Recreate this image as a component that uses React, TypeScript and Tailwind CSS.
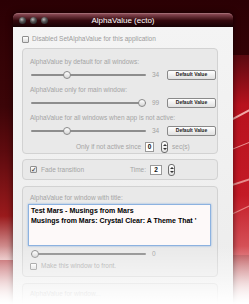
import React from 'react';

const font = "font-['Liberation_Sans',Arial,sans-serif]";

function Check({ on = false }: { on?: boolean }) {
  return (
    <span className="flex items-center justify-center w-[7px] h-[7px] rounded-[1px] border border-[#8f8f8f] bg-gradient-to-b from-white to-[#dcdcdc] text-[7px] leading-none text-[#333]">
      {on ? '✓' : ''}
    </span>
  );
}

function Slider({ pos, value }: { pos: number; value: string }) {
  return (
    <div className="flex items-center h-[10px]">
      <div className="relative ml-[8px] w-[115px] h-[2px] rounded-full bg-[#8d8d8d]">
        <span
          className="absolute top-[-3px] w-[8px] h-[8px] rounded-full border border-[#8a8a8a] bg-gradient-to-b from-white to-[#d6d6d6]"
          style={{ left: `${pos * 107}px` }}
        />
      </div>
      <span className="ml-[6px] w-[10px] text-[6.5px] text-[#a2a2a2]">{value}</span>
    </div>
  );
}

function DefaultButton() {
  return (
    <span className="flex items-center justify-center w-[49px] h-[10px] rounded-[2px] border border-[#8a8a8a] bg-gradient-to-b from-white to-[#e0e0e0] text-[5px] font-bold text-[#222]">
      Default Value
    </span>
  );
}

function Stepper() {
  return (
    <span className="flex flex-col items-center justify-center gap-[2px] w-[7px] h-[12px] rounded-[3px] border border-[#6f6f6f] bg-gradient-to-b from-white to-[#e4e4e4]">
      <span className="w-0 h-0 border-x-[2px] border-x-transparent border-b-[2px] border-b-[#333]" />
      <span className="w-0 h-0 border-x-[2px] border-x-transparent border-t-[2px] border-t-[#333]" />
    </span>
  );
}

function NumBox({ v, w }: { v: string; w: string }) {
  return (
    <span className={`flex items-center justify-center ${w} h-[10px] border border-[#9a9a9a] bg-white text-[6.5px] font-bold text-[#111]`}>
      {v}
    </span>
  );
}

export default function App() {
  return (
    <div className={`relative w-[249px] h-[304px] overflow-hidden ${font} bg-[linear-gradient(180deg,#2b0004_0%,#3c0508_35%,#7e1014_62%,#a6161c_78%,#f5e6e6_100%)]`}>
      {/* red glow and streaks behind the window */}
      <div className="absolute right-0 top-[55px] w-[40px] h-[200px] bg-[linear-gradient(180deg,#5a0a10_0%,#b8121e_25%,#c41a26_70%,#d85a60_100%)]" />
      <div className="absolute right-[-10px] top-[120px] w-[60px] h-[2px] rotate-[-28deg] bg-[#ffd0c8] opacity-80" />
      <div className="absolute right-[-10px] top-[150px] w-[60px] h-[1px] rotate-[-22deg] bg-[#ffc8c0] opacity-70" />
      <div className="absolute right-[-10px] top-[185px] w-[60px] h-[2px] rotate-[-18deg] bg-[#ffd8d0] opacity-60" />
      <div className="absolute right-[-10px] top-[215px] w-[60px] h-[1px] rotate-[-25deg] bg-[#ffc0b8] opacity-60" />
      <div className="absolute left-0 top-[150px] w-[14px] h-[110px] bg-[linear-gradient(180deg,#5a0a0e_0%,#9a1a1c_60%,#e8c0c0_100%)]" />

      <div className="relative ml-[13px] mt-[13px] w-[220px] rounded-t-[5px] shadow-[0_0_6px_rgba(0,0,0,0.6)]">
        {/* title bar */}
        <div className="relative flex items-center h-[14px] rounded-t-[5px] bg-gradient-to-b from-[#8a4a55] via-[#34090e] to-[#160204] border-t border-[#a06a72]">
          <div className="flex items-center gap-[4px] pl-[6px]">
            <span className="w-[7px] h-[7px] rounded-full bg-[radial-gradient(circle_at_40%_35%,#bbb_0%,#555_40%,#111_100%)]" />
            <span className="w-[7px] h-[7px] rounded-full bg-[radial-gradient(circle_at_40%_35%,#bbb_0%,#555_40%,#111_100%)]" />
            <span className="w-[7px] h-[7px] rounded-full bg-[radial-gradient(circle_at_40%_35%,#bbb_0%,#555_40%,#111_100%)]" />
          </div>
          <span className="absolute inset-x-0 text-center text-[8px] text-white">AlphaValue (ecto)</span>
        </div>

        {/* content */}
        <div className="h-[280px] bg-gradient-to-b from-[#f4f4f4] to-[#ececec] pl-[9px] pr-[15px] pt-[8px]">
          <div className="flex items-center gap-[3px] h-[8px] text-[6.5px] text-[#9c9c9c]">
            <Check />
            <span>Disabled SetAlphaValue for this application</span>
          </div>

          {/* group 1 */}
          <div className="mt-[5px] h-[106px] rounded-[4px] border border-[#d2d2d2] bg-[#e9e9e9] pt-[9px] pr-[1px] text-[6.5px] text-[#a4a4a4]">
            <div className="pl-[7px] h-[8px] leading-[8px]">AlphaValue by default for all windows:</div>
            <div className="mt-[4px] flex items-center justify-between">
              <Slider pos={0.3} value="34" />
              <DefaultButton />
            </div>
            <div className="mt-[6px] pl-[7px] h-[8px] leading-[8px]">AlphaValue only for main window:</div>
            <div className="mt-[4px] flex items-center justify-between">
              <Slider pos={1} value="99" />
              <DefaultButton />
            </div>
            <div className="mt-[6px] pl-[7px] h-[8px] leading-[8px]">AlphaValue for all windows when app is not active:</div>
            <div className="mt-[4px] flex items-center justify-between">
              <Slider pos={0.3} value="34" />
              <DefaultButton />
            </div>
            <div className="mt-[5px] flex items-center h-[12px] pl-[53px]">
              <span>Only if not active since</span>
              <span className="ml-[4px]"><NumBox v="0" w="w-[9px]" /></span>
              <span className="ml-[7px]"><Stepper /></span>
              <span className="ml-[4px]">sec(s)</span>
            </div>
          </div>

          {/* group 2 */}
          <div className="mt-[5px] flex items-center h-[21px] rounded-[4px] border border-[#d2d2d2] bg-[#e9e9e9] pl-[7px] text-[6.5px] text-[#a4a4a4]">
            <Check on />
            <span className="ml-[4px]">Fade transition</span>
            <span className="ml-[46px]">Time:</span>
            <span className="ml-[4px]"><NumBox v="2" w="w-[12px]" /></span>
            <span className="ml-[6px]"><Stepper /></span>
          </div>

          {/* group 3 */}
          <div className="mt-[6px] h-[91px] rounded-[4px] border border-[#d2d2d2] bg-[#e9e9e9] pt-[7px] text-[6.5px] text-[#a4a4a4]">
            <div className="pl-[7px] h-[8px] leading-[8px]">AlphaValue for window with title:</div>
            <div className="mt-[2px] ml-[5px] w-[183px] h-[42px] border-[1.5px] border-[#8cb2e0] shadow-[0_0_2px_#8cb2e0] bg-[#fdf9f9] px-[2px] pt-[1px] text-[7px] leading-[10px] font-semibold text-black whitespace-nowrap overflow-hidden">
              <div>Test Mars - Musings from Mars</div>
              <div>Musings from Mars: Crystal Clear: A Theme That '</div>
            </div>
            <div className="mt-[3px]">
              <Slider pos={0} value="0" />
            </div>
            <div className="mt-[3px] flex items-center gap-[4px] pl-[7px] h-[8px]">
              <Check />
              <span>Make this window to front.</span>
            </div>
          </div>

          {/* group 4 */}
          <div className="mt-[6px] h-[40px] rounded-[4px] border border-[#d2d2d2] bg-[#e9e9e9] pt-[5px] pl-[7px] text-[6.5px] text-[#a4a4a4]">
            AlphaValue for window...
          </div>
        </div>
      </div>

      {/* reflection fade at the bottom */}
      <div className="absolute inset-x-0 bottom-0 h-[58px] bg-gradient-to-b from-transparent via-[#ffffff70] to-white" />
    </div>
  );
}
